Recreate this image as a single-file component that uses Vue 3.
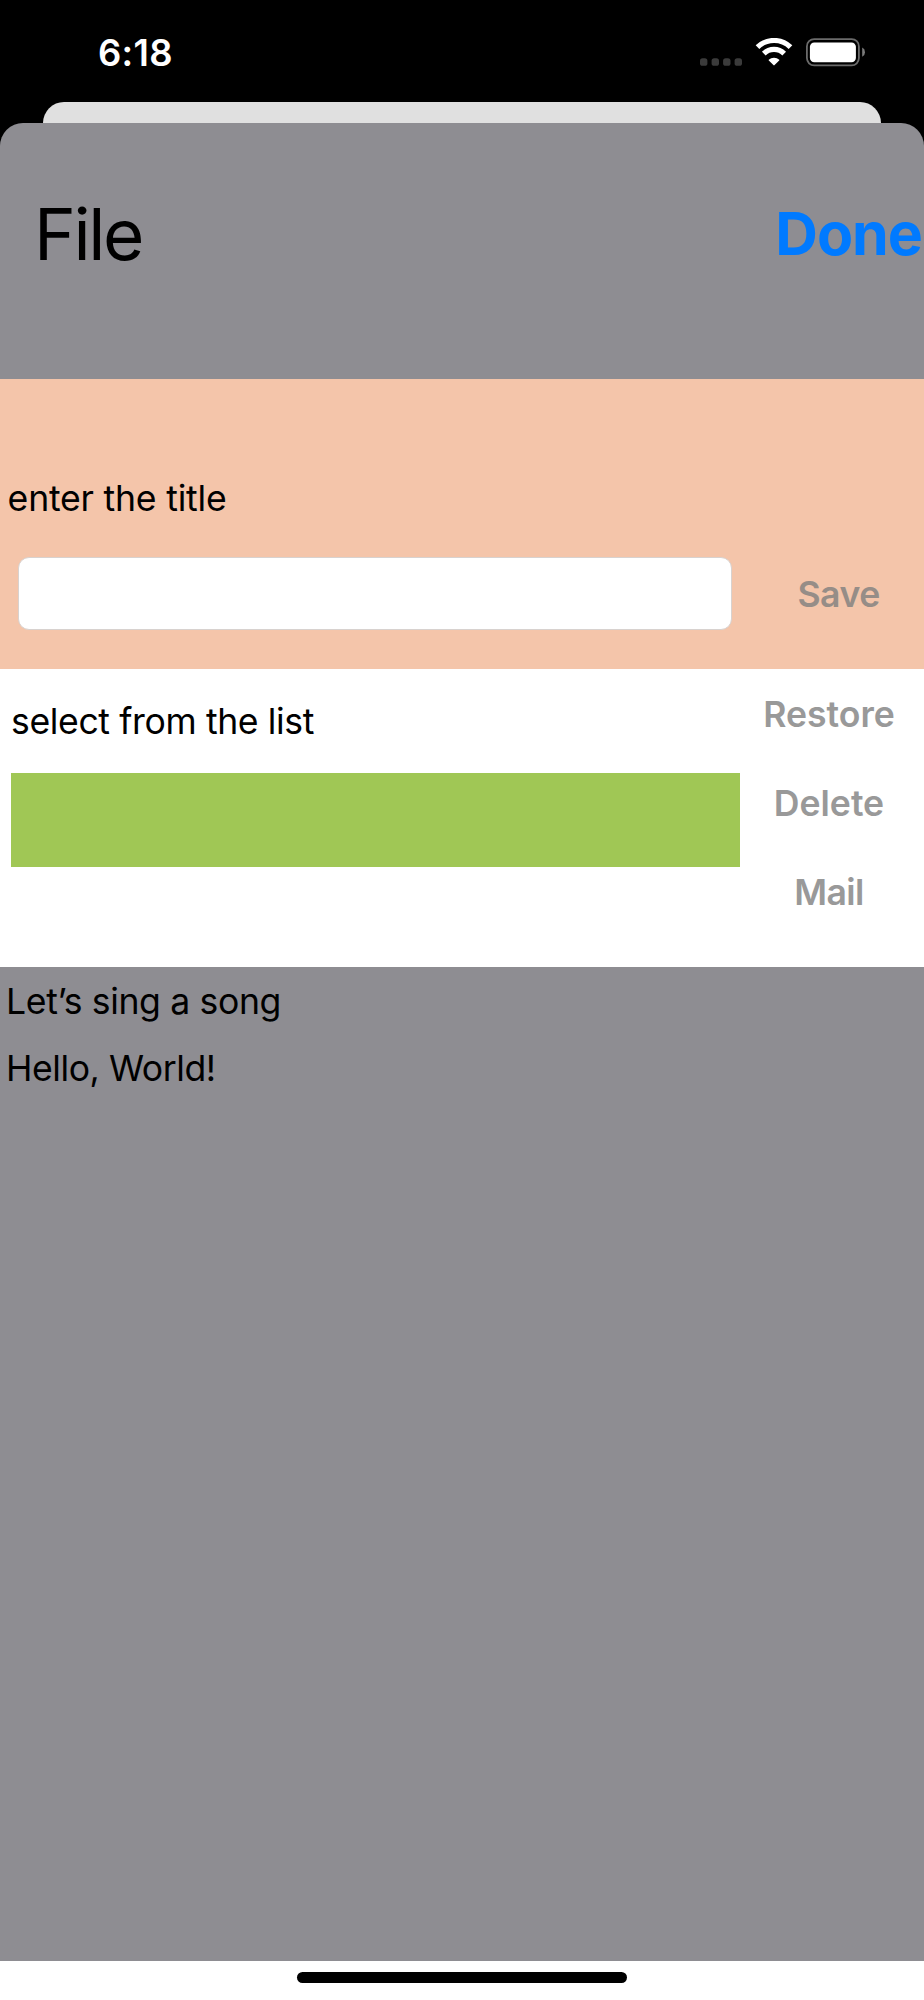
<script setup>
const actions = ['Restore', 'Delete', 'Mail']
const lines = ['Let’s sing a song', 'Hello, World!']
</script>

<template>
  <div class="screen">
    <div class="status">
      <span class="time">6:18</span>
      <svg class="indicators" width="166" height="30" viewBox="0 0 166 30">
        <g fill="#3b3b3b">
          <rect x="0" y="20.2" width="7.4" height="7.6" rx="2.6" />
          <rect x="11.6" y="20.2" width="7.4" height="7.6" rx="2.6" />
          <rect x="23.1" y="20.2" width="7.4" height="7.6" rx="2.6" />
          <rect x="34.6" y="20.2" width="7.4" height="7.6" rx="2.6" />
        </g>
        <g fill="none" stroke="#fff" stroke-width="5.2">
          <path d="M57.5 9.2A23.6 23.6 0 0 1 90.5 9.2" />
          <path d="M63.8 15.6A14.6 14.6 0 0 1 84.2 15.6" />
        </g>
        <path d="M68.7 21.8A8 8 0 0 1 79.3 21.8Q79.5 22.2 79.2 22.5L74.6 27.1Q74 27.7 73.4 27.1L68.8 22.5Q68.5 22.2 68.7 21.8Z" fill="#fff" />
        <rect x="106.9" y="1.1" width="52" height="26.3" rx="7.3" fill="none" stroke="#6b6b6b" stroke-width="1.8" />
        <rect x="109.9" y="4.4" width="46" height="19.8" rx="4.4" fill="#fff" />
        <path d="M162.2 9.6Q165 11 165 14.2Q165 17.4 162.2 18.8Z" fill="#7a7a7a" />
      </svg>
    </div>
    <div class="behind"></div>
    <main class="sheet">
      <header class="header">
        <h1>File</h1>
        <button class="done">Done</button>
      </header>
      <section class="title-section">
        <label for="title">enter the title</label>
        <div class="title-row">
          <input id="title" type="text" />
          <button class="action save" disabled>Save</button>
        </div>
      </section>
      <section class="list-section">
        <div class="list">
          <p>select from the list</p>
          <div class="picker"></div>
        </div>
        <div class="actions">
          <button v-for="a in actions" :key="a" class="action" :class="a.toLowerCase()" disabled>{{ a }}</button>
        </div>
      </section>
      <section class="content">
        <p v-for="l in lines" :key="l" :class="{ tight: l.startsWith('Hello') }">{{ l }}</p>
      </section>
    </main>
    <footer class="home"><span></span></footer>
  </div>
</template>

<style>
body { background: #000; }
</style>

<style scoped>
.screen {
  width: 924px;
  height: 2000px;
  display: flex;
  flex-direction: column;
  overflow: hidden;
  background: #000;
  color: #000;
  font: 400 35.6px/43px Inter, "Liberation Sans", sans-serif;
}
h1, p { margin: 0; font-weight: 400; }
button { border: 0; padding: 0; margin: 0; background: none; font: inherit; white-space: nowrap; }
.status {
  height: 102px;
  flex: none;
  box-sizing: border-box;
  padding: 31px 58px 0 98px;
  display: flex;
  justify-content: space-between;
  align-items: flex-start;
  color: #fff;
}
.time { font-size: 36.4px; font-weight: 600; line-height: 44px; letter-spacing: .3px; }
.indicators { margin-top: 7.3px; }
.behind {
  height: 21px;
  flex: none;
  margin: 0 43.5px 0 43px;
  background: #e0e0e0;
  border-radius: 21px 21px 0 0;
}
.sheet {
  height: 1838px;
  flex: none;
  display: flex;
  flex-direction: column;
  background: #8e8d92;
  border-radius: 23px 23px 0 0;
}
.header {
  height: 255.6px;
  flex: none;
  display: flex;
  justify-content: space-between;
  align-items: flex-start;
}
h1 { margin: 68px 0 0 34px; font-size: 71px; line-height: 86px; letter-spacing: -2.4px; }
.done {
  width: 148.7px;
  margin-top: 75px;
  color: #007aff;
  text-align: left;
  font-size: 59px;
  font-weight: 700;
  line-height: 71px;
  letter-spacing: -1px;
}
.title-section {
  height: 290.4px;
  flex: none;
  box-sizing: border-box;
  padding: 98.4px 0 0 7.6px;
  background: #f4c5aa;
}
label { display: block; letter-spacing: -.2px; }
.title-row { display: flex; margin: 37px 0 0 10.4px; }
input {
  box-sizing: border-box;
  width: 714.5px;
  height: 73px;
  padding: 0 14px;
  border: 1px solid #d8d2cf;
  border-radius: 11px;
  background: #fff;
  font: inherit;
}
.action { color: #999; font-weight: 600; }
.save { margin: 16px 0 0 65px; height: 43px; color: #968d87; letter-spacing: -.5px; }
.list-section {
  height: 298px;
  flex: none;
  display: flex;
  background: #fff;
}
.list { width: 729px; padding: 31px 0 0 11px; letter-spacing: -.37px; }
.picker { height: 94px; margin-top: 30px; background: #a0c755; }
.actions {
  width: 178px;
  padding-top: 24px;
  display: flex;
  flex-direction: column;
  align-items: center;
  gap: 46px;
}
.mail { letter-spacing: -.6px; }
.content { padding: 13px 0 0 6px; letter-spacing: -.35px; }
.content p + p { margin-top: 24px; }
.tight { letter-spacing: -.43px; }
.home {
  flex: 1;
  display: flex;
  justify-content: center;
  background: #fff;
}
.home span {
  width: 330.5px;
  height: 11.3px;
  margin-top: 10.8px;
  border-radius: 6px;
  background: #000;
}
</style>
